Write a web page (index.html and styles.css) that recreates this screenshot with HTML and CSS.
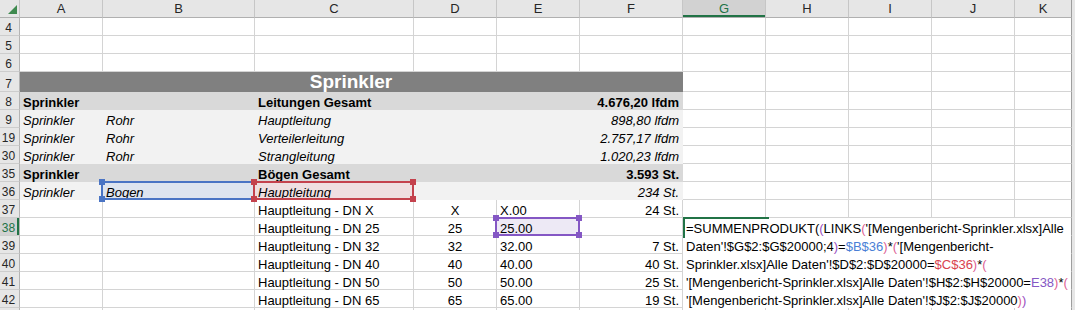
FILE: index.html
```html
<!DOCTYPE html>
<html lang="de">
<head>
  <meta charset="UTF-8">
  <meta name="viewport" content="width=device-width, initial-scale=1.0">
  <title>Mengenbericht Sprinkler</title>
  <link rel="stylesheet" href="styles.css">
</head>
<body>
  <table class="sheet">
    <colgroup>
      <col class="w-head">
      <col class="w-a">
      <col class="w-b">
      <col class="w-c">
      <col class="w-d">
      <col class="w-e">
      <col class="w-f">
      <col class="w-g">
      <col class="w-h">
      <col class="w-i">
      <col class="w-j">
      <col class="w-k">
    </colgroup>

    <!-- column letters -->
    <tr class="col-head">
      <th class="corner"><svg width="20" height="14" viewBox="0 0 20 14"><polygon points="17,3 17,12 8,12" fill="#3f8a4f"/></svg></th>
      <th>A</th><th>B</th><th>C</th><th>D</th><th>E</th><th>F</th>
      <th class="sel">G</th><th>H</th><th>I</th><th>J</th><th>K</th>
    </tr>

    <tr><th>4</th><td></td><td></td><td></td><td></td><td></td><td></td><td></td><td></td><td></td><td></td><td></td></tr>
    <tr><th>5</th><td></td><td></td><td></td><td></td><td></td><td></td><td></td><td></td><td></td><td></td><td></td></tr>
    <tr><th>6</th><td></td><td></td><td></td><td></td><td></td><td></td><td></td><td></td><td></td><td></td><td></td></tr>

    <tr class="title-row">
      <th>7</th>
      <td class="title" colspan="6">Sprinkler</td>
      <td></td><td></td><td></td><td></td><td></td>
    </tr>

    <tr class="total">
      <th>8</th>
      <td>Sprinkler</td><td></td><td>Leitungen Gesamt</td><td></td><td></td><td class="num">4.676,20 lfdm</td>
      <td></td><td></td><td></td><td></td><td></td>
    </tr>
    <tr class="detail">
      <th>9</th>
      <td>Sprinkler</td><td>Rohr</td><td>Hauptleitung</td><td></td><td></td><td class="num">898,80 lfdm</td>
      <td></td><td></td><td></td><td></td><td></td>
    </tr>
    <tr class="detail">
      <th>19</th>
      <td>Sprinkler</td><td>Rohr</td><td>Verteilerleitung</td><td></td><td></td><td class="num">2.757,17 lfdm</td>
      <td></td><td></td><td></td><td></td><td></td>
    </tr>
    <tr class="detail">
      <th>30</th>
      <td>Sprinkler</td><td>Rohr</td><td>Strangleitung</td><td></td><td></td><td class="num">1.020,23 lfdm</td>
      <td></td><td></td><td></td><td></td><td></td>
    </tr>
    <tr class="total">
      <th>35</th>
      <td>Sprinkler</td><td></td><td>Bögen Gesamt</td><td></td><td></td><td class="num">3.593 St.</td>
      <td></td><td></td><td></td><td></td><td></td>
    </tr>
    <tr class="detail">
      <th>36</th>
      <td>Sprinkler</td><td class="ref ref-blue">Bogen</td><td class="ref ref-red">Hauptleitung</td><td></td><td></td><td class="num">234 St.</td>
      <td></td><td></td><td></td><td></td><td></td>
    </tr>

    <tr>
      <th>37</th>
      <td></td><td></td><td>Hauptleitung - DN X</td><td class="mid">X</td><td>X.00</td><td class="num">24 St.</td>
      <td></td><td></td><td></td><td></td><td></td>
    </tr>
    <tr>
      <th class="sel">38</th>
      <td></td><td></td><td>Hauptleitung - DN 25</td><td class="mid">25</td><td class="ref ref-purple">25.00</td><td class="num"></td>
      <td class="editing">
        <div class="editor">
          =SUMMENPRODUKT(<span class="p1">(</span>LINKS<span class="p2">(</span>'[Mengenbericht-Sprinkler.xlsx]Alle<br>
          Daten'!$G$2:$G$20000;4<span class="p1">)</span>=<span class="r-blue">$B$36</span><span class="p2">)</span>*<span class="p2">(</span>'[Mengenbericht-<br>
          Sprinkler.xlsx]Alle Daten'!$D$2:$D$20000=<span class="r-red">$C$36</span><span class="p2">)</span>*<span class="p2">(</span><br>
          '[Mengenbericht-Sprinkler.xlsx]Alle Daten'!$H$2:$H$20000=<span class="r-purple">E38</span><span class="p2">)</span>*<span class="p2">(</span><br>
          '[Mengenbericht-Sprinkler.xlsx]Alle Daten'!$J$2:$J$20000<span class="p2">)</span><span class="p1">)</span>
        </div>
      </td>
      <td></td><td></td><td></td><td></td>
    </tr>
    <tr>
      <th>39</th>
      <td></td><td></td><td>Hauptleitung - DN 32</td><td class="mid">32</td><td>32.00</td><td class="num">7 St.</td>
      <td></td><td></td><td></td><td></td><td></td>
    </tr>
    <tr>
      <th>40</th>
      <td></td><td></td><td>Hauptleitung - DN 40</td><td class="mid">40</td><td>40.00</td><td class="num">40 St.</td>
      <td></td><td></td><td></td><td></td><td></td>
    </tr>
    <tr>
      <th>41</th>
      <td></td><td></td><td>Hauptleitung - DN 50</td><td class="mid">50</td><td>50.00</td><td class="num">25 St.</td>
      <td></td><td></td><td></td><td></td><td></td>
    </tr>
    <tr>
      <th>42</th>
      <td></td><td></td><td>Hauptleitung - DN 65</td><td class="mid">65</td><td>65.00</td><td class="num">19 St.</td>
      <td></td><td></td><td></td><td></td><td></td>
    </tr>
    <tr>
      <th></th>
      <td></td><td></td><td></td><td></td><td></td><td></td><td></td><td></td><td></td><td></td><td></td>
    </tr>
  </table>
</body>
</html>
```

FILE: styles.css
```css
* {
  box-sizing: border-box;
}
body {
  margin: 0;
  background-color: #e6e6e6;
  font-family: "Liberation Sans", Arial, sans-serif;
  font-size: 13px;
  color: #000;
  overflow: hidden;
}
.sheet {
  border-collapse: separate;
  border-spacing: 0;
  table-layout: fixed;
  width: 1072px;
  background-color: #fff;
}
.w-head { width: 20px; }
.w-a { width: 83px; }
.w-b { width: 152px; }
.w-c { width: 159px; }
.w-d, .w-e { width: 83px; }
.w-f { width: 103px; }
.w-g, .w-h, .w-i, .w-j { width: 83px; }
.w-k { width: 57px; }

.sheet tr {
  height: 18px;
}
.sheet th,
.sheet td {
  padding: 0 3px;
  white-space: nowrap;
  vertical-align: bottom;
  line-height: 13px;
}
.sheet td {
  border-right: 1px solid #d4d4d4;
  border-bottom: 1px solid #d4d4d4;
}
.sheet td:last-child {
  border-right-color: #9e9e9e;
}

/* row and column headers */
.sheet th {
  padding: 0 2px 0 0;
  background-color: #e6e6e6;
  color: #262626;
  font-weight: normal;
  font-size: 12px;
  text-align: center;
  border-right: 1px solid #b4b4b4;
  border-bottom: 1px solid #cdcdcd;
}
.col-head {
  height: 15px;
}
.sheet .col-head th {
  padding: 0;
  font-size: 13px;
  line-height: 14px;
  vertical-align: middle;
  border-right: 1px solid #c6c6c6;
  border-bottom: 1px solid #b0b0b0;
}
.sheet .col-head th:last-child {
  border-right-color: #9e9e9e;
}
.corner svg {
  display: block;
}
.sheet th.sel {
  background-color: #d2d2d2;
  color: #217346;
  box-shadow: inset -2px 0 #217346;
}
.sheet .col-head th.sel {
  box-shadow: inset 0 -2px #217346;
}

/* title band */
.title-row {
  height: 23px;
}
.sheet td.title {
  background-color: #808080;
  border-color: #808080;
  color: #fff;
  font-weight: bold;
  font-size: 19px;
  line-height: 19px;
  text-align: center;
}

/* filled rows, columns A to F */
.total td:nth-child(-n+7) {
  background-color: #d9d9d9;
  border-color: #d9d9d9;
  font-weight: bold;
}
.detail td:nth-child(-n+7) {
  background-color: #f2f2f2;
  border-color: #f2f2f2;
  font-style: italic;
}

.num {
  text-align: right;
}
.mid {
  text-align: center;
}

/* referenced cells while editing the formula */
.sheet td.ref {
  position: relative;
}
.ref::before {
  content: "";
  position: absolute;
  top: -1px;
  left: -2px;
  right: -1px;
  bottom: -1px;
  border: 2px solid currentColor;
}
.ref::after {
  content: "";
  position: absolute;
  top: -3px;
  left: -4px;
  right: -3px;
  bottom: -3px;
  background:
    linear-gradient(var(--ref), var(--ref)) left top / 6px 6px no-repeat,
    linear-gradient(var(--ref), var(--ref)) right top / 6px 6px no-repeat,
    linear-gradient(var(--ref), var(--ref)) left bottom / 6px 6px no-repeat,
    linear-gradient(var(--ref), var(--ref)) right bottom / 6px 6px no-repeat;
}
.sheet td.ref-blue {
  --ref: #4a74c4;
  background-color: #dee4ef;
}
.sheet td.ref-red {
  --ref: #c4424d;
  background-color: #efdfe1;
}
.sheet td.ref-purple {
  --ref: #8457c4;
  background-color: #ede9f5;
}
.ref-blue::before { border-color: #4a74c4; }
.ref-red::before { border-color: #c4424d; }
.ref-purple::before { border-color: #8457c4; }

/* in-cell formula editor on G38 */
.sheet td.editing {
  position: relative;
}
.editor {
  position: absolute;
  top: 0;
  left: 0;
  width: 388px;
  height: 90px;
  padding: 2px 0 0 3px;
  background-color: #fff;
  line-height: 18px;
  white-space: nowrap;
  z-index: 2;
}
.editor::before {
  content: "";
  position: absolute;
  top: -1px;
  left: 0;
  width: 84px;
  height: 19px;
  border-top: 2px solid #217346;
  border-left: 2px solid #217346;
}
.p1 { color: #9a4fbf; }
.p2 { color: #dd5f95; }
.r-blue { color: #4a7fd6; }
.r-red { color: #d8434f; }
.r-purple { color: #8457c4; }
```
